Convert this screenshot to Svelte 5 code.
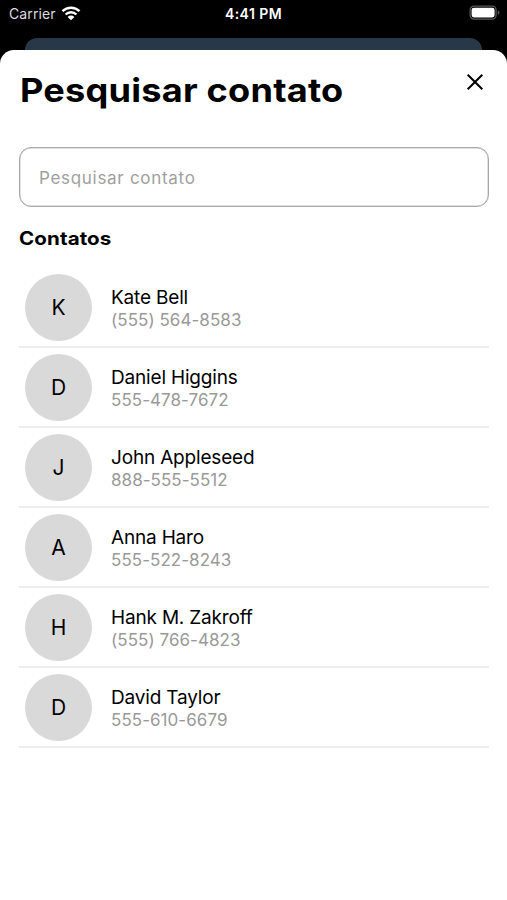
<script>
  let search = $state('');

  const contacts = [
    { name: 'Kate Bell', phone: '(555) 564-8583' },
    { name: 'Daniel Higgins', phone: '555-478-7672' },
    { name: 'John Appleseed', phone: '888-555-5512' },
    { name: 'Anna Haro', phone: '555-522-8243' },
    { name: 'Hank M. Zakroff', phone: '(555) 766-4823' },
    { name: 'David Taylor', phone: '555-610-6679' }
  ];

  let filtered = $derived(
    contacts.filter((c) => c.name.toLowerCase().includes(search.toLowerCase()))
  );
</script>

<div class="screen">
  <div class="status">
    <div class="carrier">
      <span>Carrier</span>
      <svg class="wifi" width="20" height="15" viewBox="0 0 20 15">
        <g fill="none" stroke="#fff" stroke-width="2.4">
          <path d="M1.5 5.2a12.2 12.2 0 0 1 17 0" />
          <path d="M4.6 8.5a7.7 7.7 0 0 1 10.8 0" />
        </g>
        <path d="M6.6 10.9a4.9 4.9 0 0 1 6.8 0L10 14.3z" fill="#fff" />
      </svg>
    </div>
    <span class="time">4:41 PM</span>
    <svg class="battery" width="31" height="16" viewBox="0 0 31 16">
      <rect x="1.1" y="1.1" width="26" height="13" rx="4" fill="none" stroke="#58585a" stroke-width="1.3" />
      <rect x="2.6" y="2.7" width="23" height="9.8" rx="2.4" fill="#fff" />
      <path d="M28.8 5.2v4.8c1.1-.4 1.7-1.3 1.7-2.4s-.6-2-1.7-2.4z" fill="#58585a" />
    </svg>
  </div>

  <!-- top edge of the page behind the modal -->
  <div class="behind"></div>

  <main class="sheet">
    <header>
      <h1>Pesquisar contato</h1>
      <button class="close" aria-label="Fechar">
        <svg width="18" height="18" viewBox="0 0 18 18">
          <path d="M1.7 1.7l14.6 14.6M16.3 1.7L1.7 16.3" fill="none" stroke="#000" stroke-width="2" />
        </svg>
      </button>
    </header>

    <input type="text" placeholder="Pesquisar contato" bind:value={search} />

    <h2>Contatos</h2>

    <ul>
      {#each filtered as { name, phone }}
        <li>
          <div class="avatar">{name[0]}</div>
          <div class="info">
            <span class="name">{name}</span>
            <span class="phone">{phone}</span>
          </div>
        </li>
      {/each}
    </ul>
  </main>
</div>

<style>
  :global(body) {
    margin: 0;
    background: #000;
  }

  .screen {
    display: flex;
    flex-direction: column;
    height: 900px;
    background: #000;
    font-family: Inter, "Liberation Sans", sans-serif;
    overflow: hidden;
  }

  .status {
    display: grid;
    grid-template-columns: 1fr auto 1fr;
    align-items: center;
    height: 28px;
    margin-bottom: 10px;
    padding: 0 7px 0 9px;
    color: #fff;
    font-size: 14px;
    line-height: 28px;
  }

  .carrier {
    display: flex;
    align-items: center;
    gap: 6px;
    color: #dcdcdc;
    letter-spacing: 0.1px;
  }

  .wifi {
    margin: -2px 0 0 -1px;
  }

  .time {
    margin-right: 2px;
    font-weight: 600;
    letter-spacing: 0.45px;
  }

  .battery {
    justify-self: end;
    margin-top: -2px;
  }

  .behind {
    flex: none;
    height: 12px;
    margin: 0 25px;
    border-radius: 12px 12px 0 0;
    background: #283848;
  }

  .sheet {
    flex: 1;
    padding: 0 18px 0 19px;
    border-radius: 14px 14px 0 0;
    background: #fff;
  }

  header {
    display: flex;
    justify-content: space-between;
    height: 97px;
  }

  h1,
  h2 {
    font-weight: 700;
    transform-origin: left;
  }

  h1 {
    margin: 0 0 0 1px;
    padding-top: 18px;
    font-size: 33px;
    line-height: 44px;
    letter-spacing: 0.2px;
    white-space: nowrap;
    transform: scaleX(1.095);
  }

  .close {
    display: flex;
    width: 18px;
    height: 18px;
    margin: 23px 5px 0 0;
    padding: 0;
    border: none;
    background: none;
  }

  input {
    display: block;
    box-sizing: border-box;
    width: 100%;
    height: 60px;
    padding: 1px 19px 0;
    border: 1px solid #a8a8a8;
    border-radius: 12px;
    outline: none;
    background: #fff;
    box-shadow: inset 0 0 0 0.5px #c4c4c4;
    font-family: inherit;
    font-size: 17px;
    letter-spacing: 0.7px;
  }

  input::placeholder {
    color: #a0a0a0;
    opacity: 1;
  }

  h2 {
    margin: 18px 0 17px;
    font-size: 18.5px;
    line-height: 26px;
    letter-spacing: 0.1px;
    transform: scaleX(1.11);
  }

  ul {
    margin: 0;
    padding: 0;
    list-style: none;
  }

  li {
    display: flex;
    align-items: center;
    box-sizing: border-box;
    height: 80px;
    padding-left: 6px;
    border-bottom: 2px solid #eee;
  }

  .avatar {
    width: 67px;
    height: 67px;
    margin-right: 19px;
    border-radius: 50%;
    background: #d9d9d9;
    font-size: 21px;
    line-height: 67px;
    text-align: center;
  }

  .info {
    display: flex;
    flex-direction: column;
    padding-top: 3px;
  }

  .name {
    font-size: 19px;
    line-height: 24px;
    letter-spacing: -0.18px;
  }

  .phone {
    color: #999;
    font-size: 17px;
    line-height: 21px;
    letter-spacing: 0.05px;
  }
</style>
